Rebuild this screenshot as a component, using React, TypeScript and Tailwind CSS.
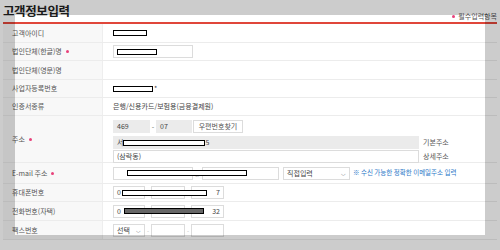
const label = 'w-[100px] shrink-0 bg-[#f8f8f8] pl-[9px] flex items-center text-[7px] text-[#555] border-r border-[#eee]';
const row = 'flex border-b border-[#ececec]';
const box = 'h-[13px] border border-[#dcdcdc] bg-white flex items-center px-[3px] text-[7px] text-[#444]';
const over = 'absolute top-1/2 -translate-y-1/2 flex';

function Req() {
  return <span className="ml-[4px] inline-block w-[3px] h-[3px] rounded-full bg-[#e8417a]" />;
}

function Redact({ w, filled }: { w: number; filled?: boolean }) {
  return (
    <span
      className={`inline-block h-[6px] border-[1.5px] border-black ${filled ? 'bg-[#666]' : 'bg-white'}`}
      style={{ width: w }}
    />
  );
}

export default function App() {
  return (
    <div className="relative w-[500px] h-[250px] overflow-hidden bg-white font-['Noto_Sans_CJK_KR',sans-serif]">
      <div className="px-[3px]">
        <div className="flex items-start justify-between h-[24px] pt-[4px] border-b-2 border-[#e0463a]">
          <h1 className="text-[12.5px] font-bold text-[#222] leading-[14px] tracking-[-0.4px]">고객정보입력</h1>
          <span className="flex items-center text-[7px] text-[#555] mt-[7px] leading-[10px]">
            <span className="inline-block w-[3px] h-[3px] rounded-full bg-[#e8417a] mr-[3px]" />
            필수입력항목
          </span>
        </div>

        <div className={`${row} h-[19px]`}>
          <div className={label}>고객아이디</div>
          <div className="flex items-center pl-[10px]">
            <Redact w={34} />
          </div>
        </div>

        <div className={`${row} h-[18px]`}>
          <div className={label}>
            법인단체(한글)명<Req />
          </div>
          <div className="flex items-center pl-[10px]">
            <div className={`${box} w-[80px]`}>
              <Redact w={40} />
            </div>
          </div>
        </div>

        <div className={`${row} h-[19px]`}>
          <div className={label}>법인단체(영문)명</div>
          <div />
        </div>

        <div className={`${row} h-[18px]`}>
          <div className={label}>사업자등록번호</div>
          <div className="flex items-center pl-[10px] text-[7px] text-[#444]">
            <Redact w={40} />
            <span className="ml-[1px]">*</span>
          </div>
        </div>

        <div className={`${row} h-[18px]`}>
          <div className={label}>인증서종류</div>
          <div className="flex items-center pl-[10px] text-[7px] text-[#444]">은행/신용카드/보험용(금융결제원)</div>
        </div>

        <div className={`${row} h-[47px]`}>
          <div className={label}>
            주소<Req />
          </div>
          <div className="flex flex-col pl-[10px] pt-[4px]">
            <div className="flex items-center">
              <div className={`${box} w-[37px] !bg-[#ebebeb] border-[#ebebeb]`}>469</div>
              <span className="w-[6px] text-center text-[7px] text-[#666]">-</span>
              <div className={`${box} w-[36px] !bg-[#ebebeb] border-[#ebebeb]`}>07</div>
              <div className={`${box} ml-[1px] w-[50px] justify-center text-[#555]`}>우편번호찾기</div>
            </div>
            <div className="flex items-center mt-[3px]">
              <div className={`${box} w-[306px] !bg-[#ebebeb] border-[#ebebeb]`}>
                <span>서</span>
                <Redact w={82} />
                <span>5</span>
              </div>
              <span className="ml-[4px] text-[7px] text-[#555]">기본주소</span>
            </div>
            <div className="flex items-center mt-[1px]">
              <div className={`${box} w-[306px]`}>(삼락동)</div>
              <span className="ml-[4px] text-[7px] text-[#555]">상세주소</span>
            </div>
          </div>
        </div>

        <div className={`${row} h-[21px]`}>
          <div className={label}>
            E-mail 주소<Req />
          </div>
          <div className="relative flex items-center pl-[10px]">
            <div className={`${box} w-[80px]`} />
            <span className="w-[9px] text-center text-[6px] text-[#aaa]">@</span>
            <div className={`${box} w-[77px]`} />
            <div className={`${box} ml-[4px] w-[67px] justify-between`}>
              <span>직접입력</span>
              <span className="text-[6px] text-[#555]">⌵</span>
            </div>
            <span className="ml-[3px] text-[6.5px] text-[#2a78c8]">※ 수신 가능한 정확한 이메일주소 입력</span>
            <span className={`${over} left-[24px]`}>
              <Redact w={120} />
            </span>
          </div>
        </div>

        <div className={`${row} h-[18px]`}>
          <div className={label}>휴대폰번호</div>
          <div className="relative flex items-center pl-[10px]">
            <div className={`${box} w-[32px]`}>0</div>
            <span className="w-[6px] text-center text-[6px] text-[#ccc]">-</span>
            <div className={`${box} w-[34px]`} />
            <span className="w-[6px] text-center text-[6px] text-[#ccc]">-</span>
            <div className={`${box} w-[33px] justify-end`}>7</div>
            <span className={`${over} left-[19px]`}>
              <Redact w={85} />
            </span>
          </div>
        </div>

        <div className={`${row} h-[19px]`}>
          <div className={label}>전화번호(자택)</div>
          <div className="relative flex items-center pl-[10px]">
            <div className={`${box} w-[32px]`}>0</div>
            <span className="w-[6px] text-center text-[6px] text-[#ccc]">-</span>
            <div className={`${box} w-[34px]`} />
            <span className="w-[6px] text-center text-[6px] text-[#ccc]">-</span>
            <div className={`${box} w-[33px] justify-end`}>32</div>
            <span className={`${over} left-[21px]`}>
              <Redact w={80} filled />
            </span>
          </div>
        </div>

        <div className={`${row} h-[19px]`}>
          <div className={label}>팩스번호</div>
          <div className="flex items-center pl-[10px]">
            <div className={`${box} w-[32px] justify-between`}>
              <span>선택</span>
              <span className="text-[6px] text-[#555]">⌵</span>
            </div>
            <span className="w-[6px] text-center text-[6px] text-[#bbb]">-</span>
            <div className={`${box} w-[34px]`} />
            <span className="w-[6px] text-center text-[6px] text-[#bbb]">-</span>
            <div className={`${box} w-[33px]`} />
          </div>
        </div>
      </div>

      <div className="pointer-events-none absolute left-[15px] top-[15px] w-[470px] h-[220px] shadow-[0_0_0_600px_rgba(0,0,0,0.2)]" />
    </div>
  );
}
